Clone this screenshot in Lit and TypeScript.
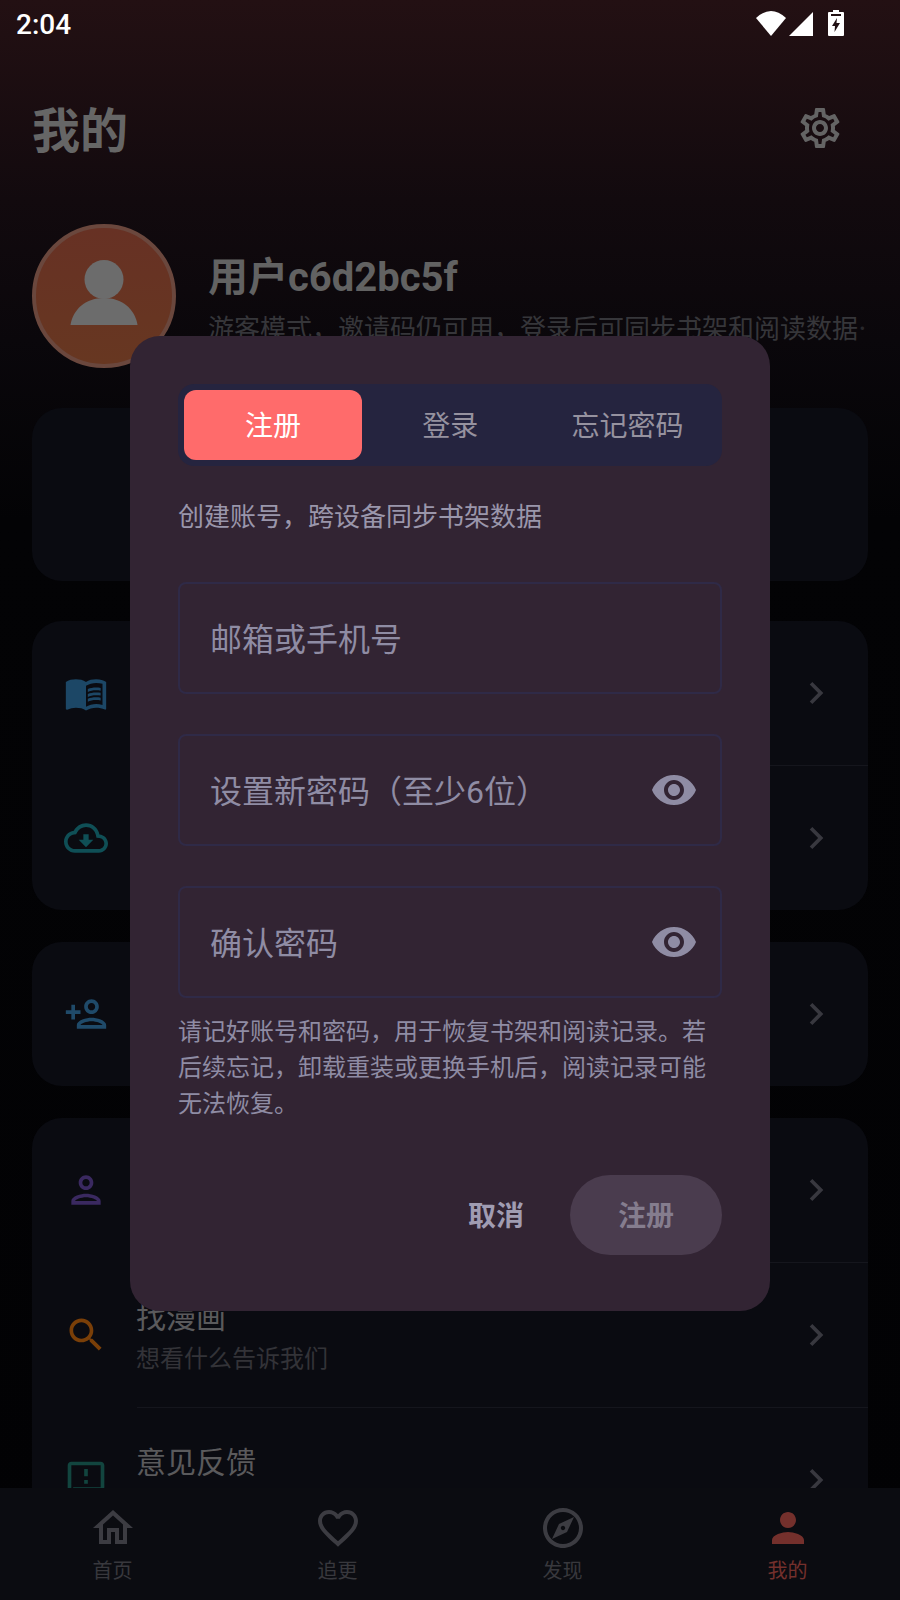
import { LitElement, html, css, svg } from 'lit';
import { customElement } from 'lit/decorators.js';

const ICONS: Record<string, ReturnType<typeof svg>> = {
  book: svg`<path d="M21 5c-1.11-.35-2.33-.5-3.5-.5-1.95 0-4.05.4-5.5 1.5-1.45-1.1-3.55-1.5-5.5-1.5S2.45 4.9 1 6v14.65c0 .25.25.5.5.5.1 0 .15-.05.25-.05C3.1 20.45 5.05 20 6.5 20c1.95 0 4.05.4 5.5 1.5 1.35-.85 3.8-1.5 5.5-1.5 1.65 0 3.35.3 4.75 1.05.1.05.15.05.25.05.25 0 .5-.25.5-.5V6c-.6-.45-1.25-.75-2-1zm0 13.5c-1.1-.35-2.3-.5-3.5-.5-1.7 0-4.15.65-5.5 1.5V8c1.35-.85 3.8-1.5 5.5-1.5 1.2 0 2.4.15 3.5.5v11.5z"/><path d="M17.5 10.5c.88 0 1.73.09 2.5.26V9.24c-.79-.15-1.64-.24-2.5-.24-1.7 0-3.24.29-4.5.83v1.66c1.13-.64 2.7-.99 4.5-.99zM13 12.49v1.66c1.13-.64 2.7-.99 4.5-.99.88 0 1.73.09 2.5.26V11.9c-.79-.15-1.64-.24-2.5-.24-1.7 0-3.24.3-4.5.83zM17.5 14.33c-1.7 0-3.24.29-4.5.83v1.66c1.13-.64 2.7-.99 4.5-.99.88 0 1.73.09 2.5.26v-1.52c-.79-.16-1.64-.24-2.5-.24z"/>`,
  cloud: svg`<path d="M19.35 10.04C18.67 6.59 15.64 4 12 4 9.11 4 6.6 5.64 5.35 8.04 2.34 8.36 0 10.91 0 14c0 3.31 2.69 6 6 6h13c2.76 0 5-2.24 5-5 0-2.64-2.05-4.78-4.65-4.96zM19 18H6c-2.21 0-4-1.79-4-4 0-2.05 1.53-3.76 3.56-3.97l1.07-.11.5-.95C8.08 7.14 9.94 6 12 6c2.62 0 4.88 1.86 5.39 4.43l.3 1.5 1.53.11c1.56.1 2.78 1.41 2.78 2.96 0 1.65-1.35 3-3 3zm-5.55-8h-2.9v3H8l4 4 4-4h-2.55z"/>`,
  personAdd: svg`<path d="M15 12c2.21 0 4-1.79 4-4s-1.79-4-4-4-4 1.79-4 4 1.79 4 4 4zm0-6c1.1 0 2 .9 2 2s-.9 2-2 2-2-.9-2-2 .9-2 2-2zm0 8c-2.67 0-8 1.34-8 4v2h16v-2c0-2.66-5.33-4-8-4zm-6 4c.22-.72 3.31-2 6-2 2.7 0 5.8 1.29 6 2H9zm-3-3v-3h3v-2H6V7H4v3H1v2h3v3h2z"/>`,
  personLine: svg`<path d="M12 6c1.1 0 2 .9 2 2s-.9 2-2 2-2-.9-2-2 .9-2 2-2m0 10c2.7 0 5.8 1.29 6 2H6c.23-.72 3.31-2 6-2m0-12C9.79 4 8 5.79 8 8s1.79 4 4 4 4-1.79 4-4-1.79-4-4-4zm0 10c-2.67 0-8 1.34-8 4v2h16v-2c0-2.66-5.33-4-8-4z"/>`,
  search: svg`<path d="M15.5 14h-.79l-.28-.27C15.41 12.59 16 11.11 16 9.5 16 5.91 13.09 3 9.5 3S3 5.91 3 9.5 5.91 16 9.5 16c1.61 0 3.09-.59 4.23-1.57l.27.28v.79l5 4.99L20.49 19l-4.99-5zm-6 0C7.01 14 5 11.99 5 9.5S7.01 5 9.5 5 14 7.01 14 9.5 11.99 14 9.5 14z"/>`,
  feedback: svg`<path d="M20 2H4c-1.1 0-1.99.9-1.99 2L2 22l4-4h14c1.1 0 2-.9 2-2V4c0-1.1-.9-2-2-2zm0 14H5.17l-.59.59-.58.58V4h16v12zm-9-4h2v2h-2zm0-6h2v4h-2z"/>`,
  chevron: svg`<path d="M10 6L8.59 7.41 13.17 12l-4.58 4.59L10 18l6-6z"/>`,
  eye: svg`<path d="M12 4.5C7 4.5 2.73 7.61 1 12c1.73 4.39 6 7.5 11 7.5s9.27-3.11 11-7.5c-1.73-4.39-6-7.5-11-7.5zM12 17c-2.76 0-5-2.24-5-5s2.24-5 5-5 5 2.24 5 5-2.24 5-5 5zm0-8c-1.66 0-3 1.34-3 3s1.34 3 3 3 3-1.34 3-3-1.34-3-3-3z"/>`,
  gear: svg`<path d="M19.43 12.98c.04-.32.07-.64.07-.98 0-.34-.03-.66-.07-.98l2.11-1.65c.19-.15.24-.42.12-.64l-2-3.46c-.09-.16-.26-.25-.44-.25-.06 0-.12.01-.17.03l-2.49 1c-.52-.4-1.08-.73-1.69-.98l-.38-2.65C14.46 2.18 14.25 2 14 2h-4c-.25 0-.46.18-.49.42l-.38 2.65c-.61.25-1.17.59-1.69.98l-2.49-1c-.06-.02-.12-.03-.18-.03-.17 0-.34.09-.43.25l-2 3.46c-.13.22-.07.49.12.64l2.11 1.65c-.04.32-.07.65-.07.98 0 .33.03.66.07.98l-2.11 1.65c-.19.15-.24.42-.12.64l2 3.46c.09.16.26.25.44.25.06 0 .12-.01.17-.03l2.49-1c.52.4 1.08.73 1.69.98l.38 2.65c.03.24.24.42.49.42h4c.25 0 .46-.18.49-.42l.38-2.65c.61-.25 1.17-.59 1.69-.98l2.49 1c.06.02.12.03.18.03.17 0 .34-.09.43-.25l2-3.46c.12-.22.07-.49-.12-.64l-2.11-1.65zm-1.98-1.71c.04.31.05.52.05.73 0 .21-.02.43-.05.73l-.14 1.13.89.7 1.08.84-.7 1.21-1.27-.51-1.04-.42-.9.68c-.43.32-.84.56-1.25.73l-1.06.43-.16 1.13-.2 1.35h-1.4l-.19-1.35-.16-1.13-1.06-.43c-.43-.18-.83-.41-1.23-.71l-.91-.7-1.06.43-1.27.51-.7-1.21 1.08-.84.89-.7-.14-1.13c-.03-.31-.05-.54-.05-.74s.02-.43.05-.73l.14-1.13-.89-.7-1.08-.84.7-1.21 1.27.51 1.04.42.9-.68c.43-.32.84-.56 1.25-.73l1.06-.43.16-1.13.2-1.35h1.39l.19 1.35.16 1.13 1.06.43c.43.18.83.41 1.23.71l.91.7 1.06-.43 1.27-.51.7 1.21-1.07.85-.89.7.14 1.13zM12 8c-2.21 0-4 1.79-4 4s1.79 4 4 4 4-1.79 4-4-1.79-4-4-4zm0 6c-1.1 0-2-.9-2-2s.9-2 2-2 2 .9 2 2-.9 2-2 2z"/>`,
  home: svg`<path d="M12 5.69l5 4.5V18h-2v-6H9v6H7v-7.81l5-4.5M12 3L2 12h3v8h6v-6h2v6h6v-8h3L12 3z"/>`,
  heart: svg`<path d="M16.5 3c-1.74 0-3.41.81-4.5 2.09C10.91 3.81 9.24 3 7.5 3 4.42 3 2 5.42 2 8.5c0 3.78 3.4 6.86 8.55 11.54L12 21.35l1.45-1.32C18.6 15.36 22 12.28 22 8.5 22 5.42 19.58 3 16.5 3zm-4.4 15.55l-.1.1-.1-.1C7.14 14.24 4 11.39 4 8.5 4 6.5 5.5 5 7.5 5c1.54 0 3.04.99 3.57 2.36h1.87C13.46 5.99 14.96 5 16.5 5c2 0 3.5 1.5 3.5 3.5 0 2.89-3.14 5.74-7.9 10.05z"/>`,
  explore: svg`<path d="M12 2C6.48 2 2 6.48 2 12s4.48 10 10 10 10-4.48 10-10S17.52 2 12 2zm0 18c-4.41 0-8-3.59-8-8s3.59-8 8-8 8 3.59 8 8-3.59 8-8 8zm-5.5-2.5l7.51-3.49L17.5 6.5 9.99 9.99 6.5 17.5zm5.5-6.6c.61 0 1.1.49 1.1 1.1s-.49 1.1-1.1 1.1-1.1-.49-1.1-1.1.49-1.1 1.1-1.1z"/>`,
  person: svg`<path d="M12 12c2.21 0 4-1.79 4-4s-1.79-4-4-4-4 1.79-4 4 1.79 4 4 4zm0 2c-2.67 0-8 1.34-8 4v2h16v-2c0-2.66-5.33-4-8-4z"/>`,
};

function icon(name: string, size: number, color: string) {
  return html`<svg class="icon" width=${size} height=${size} viewBox="0 0 24 24" fill=${color}>${ICONS[name]}</svg>`;
}

interface Row {
  icon: string;
  color: string;
  title?: string;
  sub?: string;
}

const CARDS: Row[][] = [
  [
    { icon: 'book', color: '#1c4766' },
    { icon: 'cloud', color: '#0f4f56' },
  ],
  [{ icon: 'personAdd', color: '#1f4a69' }],
  [
    { icon: 'personLine', color: '#3a2960' },
    { icon: 'search', color: '#7a3f08', title: '找漫画', sub: '想看什么告诉我们' },
    { icon: 'feedback', color: '#12453f', title: '意见反馈' },
  ],
];

const TABS = [
  { ico: 'home', label: '首页' },
  { ico: 'heart', label: '追更' },
  { ico: 'explore', label: '发现' },
  { ico: 'person', label: '我的', active: true },
];

@customElement('app-root')
export class AppRoot extends LitElement {
  static styles = css`
    :host {
      display: block;
      position: relative;
      width: 900px;
      height: 1600px;
      overflow: hidden;
      font-family: Roboto, "Noto Sans CJK SC", sans-serif;
      background: linear-gradient(180deg, #231013 0, #120a0e 200px, #0a070b 340px, #030305 520px, #020204 100%);
    }
    .icon { display: block; flex: none; }

    .status {
      height: 50px;
      display: flex;
      align-items: center;
      padding-left: 16px;
      color: #fff;
      font-size: 28px;
      font-weight: 500;
      line-height: 52px;
    }
    .status-icons {
      margin-left: auto;
      margin-right: 56px;
      margin-bottom: 4px;
      display: flex;
      align-items: flex-end;
      gap: 3px;
    }
    .status-icons svg { display: block; }
    .status-icons .batt { margin-left: 12px; }

    .content { padding: 0 32px; }
    .head {
      height: 84px;
      margin-top: 38px;
      display: flex;
      align-items: center;
      justify-content: space-between;
      padding-right: 24px;
    }
    .head h1 {
      margin: 4px 0 0;
      font-size: 48px;
      line-height: 80px;
      font-weight: 700;
      color: #666;
    }
    .head .icon { margin-bottom: 4px; }

    .profile {
      margin-top: 52px;
      display: flex;
      align-items: center;
      gap: 32px;
    }
    .avatar {
      width: 144px;
      height: 144px;
      flex: none;
      box-sizing: border-box;
      border: 4px solid #6a473d;
      border-radius: 50%;
      background: linear-gradient(180deg, #673124, #673721);
    }
    .avatar svg { display: block; }
    .who { min-width: 0; flex: 1; padding-top: 5px; }
    .name {
      font-size: 40px;
      font-weight: 700;
      line-height: 56px;
      color: #626262;
    }
    .desc {
      margin-top: 3px;
      margin-right: 2px;
      font-size: 26px;
      line-height: 36px;
      color: #36363a;
      white-space: nowrap;
      overflow: hidden;
    }
    .desc span { font-family: "Noto Sans CJK SC", sans-serif; opacity: 0.7; }

    .card {
      background: #0a0b11;
      border-radius: 30px;
      margin-top: 32px;
    }
    .card.blank { height: 173px; margin-top: 40px; }
    .card.first { margin-top: 40px; }
    .row {
      height: 144px;
      display: flex;
      align-items: center;
      padding-left: 32px;
      padding-right: 30px;
    }
    .row + .row { border-top: 1px solid transparent; background-image: linear-gradient(90deg, transparent 105px, #15161d 105px); background-size: 100% 1px; background-repeat: no-repeat; background-position: 0 0; background-origin: border-box; }
    .text { flex: 1; margin-left: 28px; padding-top: 4px; min-width: 0; }
    .title {
      font-size: 30px;
      line-height: 40px;
      color: #5a5a5c;
    }
    .sub {
      margin-top: 4px;
      font-size: 24px;
      line-height: 34px;
      min-height: 34px;
      color: #333338;
    }

    .nav {
      position: absolute;
      left: 0;
      right: 0;
      bottom: 0;
      height: 112px;
      display: flex;
      background: #0b0c11;
    }
    .nav-item {
      flex: 1;
      display: flex;
      flex-direction: column;
      align-items: center;
      padding-top: 16px;
      font-size: 20px;
      line-height: 28px;
      color: #38383d;
    }
    .nav-item.on { color: #74302c; }
    .nav-item span { margin-top: 5px; }

    .dialog {
      position: absolute;
      left: 130px;
      top: 336px;
      width: 640px;
      box-sizing: border-box;
      padding: 48px 48px 56px;
      background: #322433;
      border-radius: 30px;
    }
    .tabs {
      display: flex;
      height: 82px;
      box-sizing: border-box;
      padding: 6px;
      border-radius: 16px;
      background: #25243f;
    }
    .tab {
      flex: 1;
      display: flex;
      align-items: center;
      justify-content: center;
      border-radius: 12px;
      padding-bottom: 2px;
      font-size: 28px;
      color: #96929f;
    }
    .tab.on { background: #ff6b6b; color: #fff; flex: 1.004; }
    .hint {
      margin-top: 33px;
      font-size: 26px;
      line-height: 36px;
      color: #9a96ab;
    }
    .fields {
      margin-top: 47px;
      display: flex;
      flex-direction: column;
      gap: 40px;
    }
    .field {
      height: 112px;
      box-sizing: border-box;
      border: 2px solid #2f2a47;
      border-radius: 8px;
      padding: 0 22px 2px 30px;
      display: flex;
      align-items: center;
      justify-content: space-between;
      font-size: 32px;
      color: #8f8ca4;
    }
    .field .icon { margin-top: 2px; }
    .note {
      margin-top: 16px;
      font-size: 24px;
      line-height: 36px;
      color: #8f8ca4;
    }
    .actions {
      margin-top: 53px;
      display: flex;
      justify-content: flex-end;
      align-items: center;
      gap: 22px;
      font-size: 28px;
      font-weight: 700;
    }
    .cancel { padding: 0 24px 2px; color: #a09cb2; }
    .submit {
      width: 152px;
      height: 80px;
      box-sizing: border-box;
      padding-bottom: 2px;
      border-radius: 40px;
      background: #4a3c4e;
      color: #857d8e;
      display: flex;
      align-items: center;
      justify-content: center;
    }
  `;

  render() {
    return html`
      <div class="status">
        2:04
        <div class="status-icons">
          <svg width="30" height="25" viewBox="0 0 30 25" fill="#fff"><path d="M0 7Q15 -7 30 7L15 25Z"/></svg>
          <svg width="24" height="24" viewBox="0 0 24 24" fill="#fff"><path d="M24 0V24H0Z"/></svg>
          <svg class="batt" width="16" height="26" viewBox="0 0 16 26"><path fill="#fff" fill-rule="evenodd" d="M5 0H11V2H15Q16 2 16 3V25Q16 26 15 26H1Q0 26 0 25V3Q0 2 1 2H5ZM3 4V6H13V4ZM9 8L4 16H7L6.5 22L12 13H8.5Z"/></svg>
        </div>
      </div>

      <div class="content">
        <div class="head">
          <h1>我的</h1>
          ${icon('gear', 48, '#646464')}
        </div>

        <div class="profile">
          <div class="avatar">
            <svg width="136" height="136" viewBox="0 0 136 136" fill="#6c6c6c">
              <circle cx="68" cy="51.5" r="19.5"/>
              <path d="M34.5 97C37 81 50 70 68 70S99 81 101.5 97Z"/>
            </svg>
          </div>
          <div class="who">
            <div class="name">用户c6d2bc5f</div>
            <div class="desc">游客模式，邀请码仍可用，登录后可同步书架和阅读数据<span>…</span></div>
          </div>
        </div>

        <div class="card blank"></div>
        ${CARDS.map(
          (rows, i) => html`
            <div class="card ${i === 0 ? 'first' : ''}">
              ${rows.map(
                (r) => html`
                  <div class="row">
                    ${icon(r.icon, 44, r.color)}
                    <div class="text">
                      ${r.title ? html`<div class="title">${r.title}</div><div class="sub">${r.sub ?? ''}</div>` : ''}
                    </div>
                    ${icon('chevron', 44, '#38383f')}
                  </div>
                `,
              )}
            </div>
          `,
        )}
      </div>

      <nav class="nav">
        ${TABS.map(
          (t) => html`
            <div class="nav-item ${t.active ? 'on' : ''}">
              ${icon(t.ico, 48, t.active ? '#74302c' : '#3c3c42')}
              <span>${t.label}</span>
            </div>
          `,
        )}
      </nav>

      <div class="dialog">
        <div class="tabs">
          <div class="tab on">注册</div>
          <div class="tab">登录</div>
          <div class="tab">忘记密码</div>
        </div>
        <div class="hint">创建账号，跨设备同步书架数据</div>
        <div class="fields">
          <div class="field">邮箱或手机号</div>
          <div class="field">设置新密码（至少6位）${icon('eye', 48, '#8f8ca4')}</div>
          <div class="field">确认密码${icon('eye', 48, '#8f8ca4')}</div>
        </div>
        <div class="note">请记好账号和密码，用于恢复书架和阅读记录。若后续忘记，卸载重装或更换手机后，阅读记录可能无法恢复。</div>
        <div class="actions">
          <div class="cancel">取消</div>
          <div class="submit">注册</div>
        </div>
      </div>
    `;
  }
}
